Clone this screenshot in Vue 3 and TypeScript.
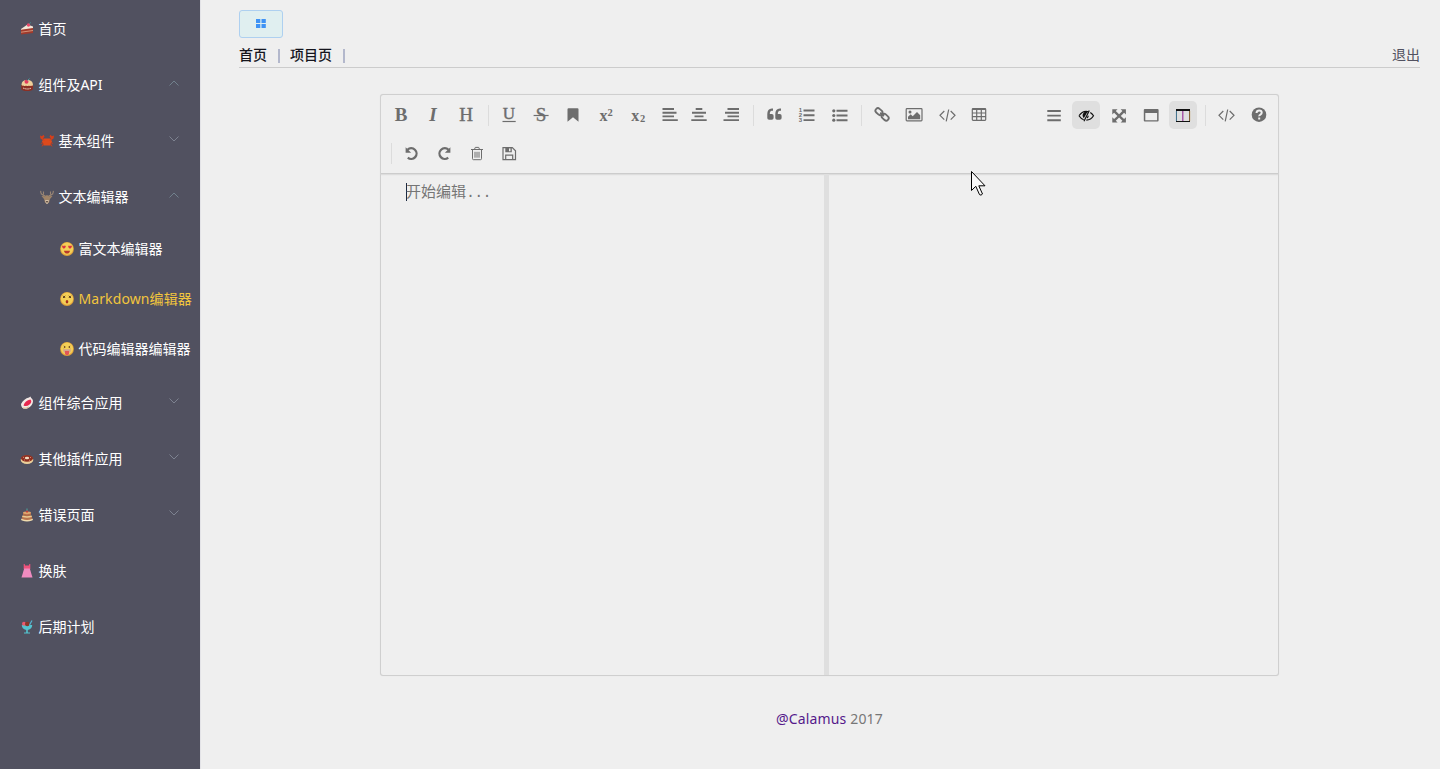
<script setup lang="ts">
interface MenuItem {
  label: string
  icon: string
  level: 1 | 2 | 3
  arrow?: 'up' | 'down'
  active?: boolean
}
interface Tool {
  icon: string
  on?: boolean
  tight?: boolean
}

const menu: MenuItem[] = [
  { label: '首页', icon: 'cake', level: 1 },
  { label: '组件及API', icon: 'cupcake', level: 1, arrow: 'up' },
  { label: '基本组件', icon: 'crab', level: 2, arrow: 'down' },
  { label: '文本编辑器', icon: 'deer', level: 2, arrow: 'up' },
  { label: '富文本编辑器', icon: 'love', level: 3 },
  { label: 'Markdown编辑器', icon: 'dizzy', level: 3, active: true },
  { label: '代码编辑器编辑器', icon: 'tongue', level: 3 },
  { label: '组件综合应用', icon: 'meat', level: 1, arrow: 'down' },
  { label: '其他插件应用', icon: 'donut', level: 1, arrow: 'down' },
  { label: '错误页面', icon: 'pancake', level: 1, arrow: 'down' },
  { label: '换肤', icon: 'dress', level: 1 },
  { label: '后期计划', icon: 'sundae', level: 1 },
]

const face = '<circle cx="7" cy="7" r="6.9" fill="#e0a03a"/><circle cx="7" cy="6.7" r="6.1" fill="#f4cf56"/>'

const pictures: Record<string, string> = {
  cake: '<path d="M1 7 7.500 2.500l5.500 2v3L1 8.500z" fill="#f3e6d8"/><path d="M1 7.800l12-1.800v5L1 12.500z" fill="#a03a2c"/><path d="M1 10.200l12-1.700" stroke="#e0a88a" stroke-width=".8"/><circle cx="8.500" cy="3" r="1.700" fill="#e8486a"/><path d="M9.500 1.800 10.500.5" stroke="#3fa0a0" stroke-width="1"/>',
  cupcake: '<path d="M1.200 7h11.800v4q-1 2-5.900 2t-5.900-2z" fill="#8c2f24"/><path d="M1.500 7Q1.500 2 7.200 2T13 7q-1 1.500-2 .5-1 1-2 0-1.500 1-3 0-1.500 1-2.500 0-1 .7-2-.5z" fill="#f0cf9a"/><circle cx="6.500" cy="3.700" r="2" fill="#e33a5c"/><path d="M7.500 2.500 9.500.5" stroke="#4a9c9c"/><path d="M3 10q4.500 2 8.500 0" stroke="#f0dccb" fill="none" stroke-dasharray="1.500 .7"/>',
  crab: '<path d="M3.500 4.500h7l1.500 3-1.500 4h-7L2 7.500z" fill="#dd4a1c"/><path d="M0 1.500l2 .7L3.500.8l1 1.700L3 4.500 5 6.500H3.500L.5 4.500zM14 1.500l-2 .7L10.500.8l-1 1.700L11 4.500 9 6.500h1.500l3-2z" fill="#d63f1a"/><path d="M3 8.500 1 9.500m2.500 0L2 12.500M11 8.500l2 1m-2.500 0 1.500 3" stroke="#c43c1c"/>',
  deer: '<path d="M.8.8Q0 4.500 5.500 6M3.500 1.500v3M.8 3.500 3 5M13.200.8Q14 4.500 8.500 6M10.500 1.500v3M13.200 3.500 11 5" stroke="#9a8674" fill="none" stroke-width="1.100"/><path d="M1.500 6l3.500.3L7 5l2 1.300 3.500-.3L10 9l-1 3.500-2 1.300-2-1.300L4 9z" fill="#a08468"/><path d="M5.300 10h3.400l-.5 3L7 14l-1.200-1z" fill="#e0cdb5"/><circle cx="7" cy="11.700" r=".9" fill="#4b3b33"/>',
  love: face + '<path d="M2 4q1.200-1 1.700.2Q5 3 5.900 4.200 5.500 6 3.900 6.800 2.200 6 2 4zM8.100 4q1.200-1 1.700.2Q11 3 12 4.200q-.4 1.800-2 2.600Q8.300 6 8.100 4z" fill="#da3340"/><path d="M4 8.800h6q-.4 2.800-3 2.800T4 8.800z" fill="#b83a2c"/>',
  dizzy: face + '<path d="M3 3.800l2.200 2.200M5.200 3.800 3 6M8.800 3.800 11 6M11 3.800 8.800 6" stroke="#5d3c1c" stroke-width="1"/><ellipse cx="7" cy="9.800" rx="1.300" ry="1.700" fill="#a5301f"/>',
  tongue: face + '<path d="M3.800 4l1.500 1-1.500 1M10.200 4 8.700 5l1.500 1" stroke="#6b4520" fill="none" stroke-width=".9"/><path d="M3 7.300h8q0 3-2 3.700H5q-2-.7-2-3.700z" fill="#d5a58c"/><path d="M5 9h4v2.200q-.3 2-2 2t-2-2z" fill="#e35656"/>',
  meat: '<path d="M1 8Q4 2.500 9 1.500l1.500-1 .5 1.300Q14 4 12.500 7.500t-6.500 5.500Q1 13 1 8z" fill="#f3e9e5"/><path d="M3.500 9.500Q5 4.500 10.500 3.500q2 2.500-1 5t-6 1z" fill="#e8284f"/><path d="M3 12q3 1 6-1" stroke="#d8b890" fill="none"/>',
  donut: '<ellipse cx="7" cy="7.700" rx="6.300" ry="4.300" fill="#ecd09a"/><ellipse cx="7" cy="6.300" rx="6" ry="3.400" fill="#8f2f20"/><ellipse cx="7" cy="6" rx="2.200" ry="1.200" fill="#f1dcc0"/><path d="M3 5l1 .7M10 5l1 1M4 8h1M9 8.300h1" stroke="#e5a08a" stroke-width=".8"/>',
  pancake: '<ellipse cx="7" cy="11.500" rx="6" ry="1.900" fill="#f0dcae"/><path d="M2 8h10v3q-5 2-10 0z" fill="#b9754d"/><ellipse cx="7" cy="8.300" rx="5" ry="1.400" fill="#e9ca93"/><path d="M3 5h8v2.500q-4 1.500-8 0z" fill="#b06d49"/><ellipse cx="7" cy="4.800" rx="4" ry="1.400" fill="#dda56e"/><path d="M7 4V.5" stroke="#4c9c96" stroke-width="1.200"/><circle cx="7" cy="3.600" r="1.100" fill="#c43c35"/>',
  dress: '<path d="M3.700 0h1L5 1.500h4L9.300 0h1v5H3.700z" fill="#f0527c"/><path d="M4.200 4.500h5.600l2.700 9h-11z" fill="#f08cc0"/>',
  sundae: '<path d="M1.800 5h10.400q0 4-4.400 5v2.500h2.200v.9H4v-.9h2.200V10Q1.800 9 1.800 5z" fill="#53c4cf"/><circle cx="4" cy="3.700" r="2" fill="#ec5a6c"/><circle cx="7.300" cy="4" r="2.300" fill="#8a3628"/><path d="M9.500 5 12 .5" stroke="#56b6d3" stroke-width="1.200"/>',
}

const slash = '<path d="M11.300 10 7 14.300l4.300 4.300M17.700 10l4.300 4.300-4.300 4.300M15.700 8.500l-2.500 11.800" class="thin"/>'

const glyphs: Record<string, string> = {
  bold: '<text x="14.100" y="20" class="serif b" text-anchor="middle">B</text>',
  italic: '<text x="14" y="20" class="serif b i" text-anchor="middle">I</text>',
  header: '<text x="14" y="20" class="serif h" text-anchor="middle">H</text>',
  underline: '<text x="14" y="18.200" class="serif u" text-anchor="middle">U</text><path d="M7.500 20.500h13.200" class="thin"/>',
  strike: '<text x="14" y="20" class="serif h" text-anchor="middle">S</text><path d="M6.600 14.500h15" class="thin"/>',
  mark: '<path d="M8.500 8.300q0-1 1-1h9q1 0 1 1v12.500l-5.500-4.500-5.500 4.500z"/>',
  sup: '<text x="7.400" y="19.500" class="script">x</text><text x="15.500" y="14.700" class="digit">2</text>',
  sub: '<text x="7.200" y="19.500" class="script">x</text><text x="15.900" y="21.300" class="digit">2</text>',
  left: '<path d="M6.500 8h11.500M6.500 11.700h14M6.500 15.400h11.500M6.500 19.100h15.300" class="bar"/>',
  center: '<path d="M10.700 8h6.600M7 11.700h14M9.500 15.400h9M6.300 19.100h15.400" class="bar"/>',
  right: '<path d="M10.500 8h11.500M8 11.700h14M10.500 15.400h11.500M6.500 19.100h15.500" class="bar"/>',
  quote: '<path d="M13 7.500h-1.200Q7.300 7.800 7.300 13v4q0 1.800 1.800 1.800h2.700q1.800 0 1.800-1.800v-2.300q0-1.800-1.800-1.800h-2q0-3 2-3.200H13zM21 7.500h-1.200q-4.500.3-4.500 5.500v4q0 1.800 1.800 1.800h2.700q1.800 0 1.800-1.800v-2.300q0-1.800-1.800-1.800h-2q0-3 2-3.200H21z"/>',
  ol: '<path d="M11.500 9.500h11M11.500 14.300h11M11.500 19.100h11" class="bar"/><text x="6.800" y="11" class="tiny">1</text><text x="6.800" y="16.200" class="tiny">2</text><text x="6.800" y="21.400" class="tiny">3</text>',
  ul: '<path d="M11.500 9.800h11M11.500 14.500h11M11.500 19.200h11" class="bar"/><circle cx="8.800" cy="9.800" r="1.600"/><circle cx="8.800" cy="14.500" r="1.600"/><circle cx="8.800" cy="19.200" r="1.600"/>',
  link: '<g class="thick" transform="rotate(42 14 13.500)"><rect x="6" y="10.900" width="7.600" height="5" rx="2.400"/><rect x="14.400" y="10.900" width="7.600" height="5" rx="2.400"/><path d="M11.500 13.400h5"/></g>',
  image: '<rect x="6.200" y="7.600" width="15.800" height="12.300" rx=".8" class="thin"/><path d="M8 18.300v-2.600l2.700-2.500 2 2 4.300-4.200 3.200 3.300v4z"/><circle cx="10" cy="11" r="1.500"/>',
  code: slash,
  table: '<rect x="7.300" y="7.600" width="13.400" height="11.800" rx=".8" class="thin"/><path d="M7 8.300h14M7 12h14M7 15.700h14M11.700 8v11.500M16.300 8v11.500" class="thin"/>',
  bars: '<path d="M7.300 10h13.500M7.300 14.600h13.500M7.300 19.200h13.500" class="bar"/>',
  eye: '<path d="M7 14.800Q9.800 10.400 14.200 10.300q1.200 0 2.200.4M7 14.800q1.800 2.900 4.700 3.900M18.300 11.500q2 1.300 3.200 3.300-2.500 4.200-7.200 4.400M16.200 14.800q0 1.500-1.200 2.300" class="thin"/><path d="M17.300 9.500 12 20.300" class="thin"/><path d="M12.500 11q-3.500 3-.7 6.200L15.700 10.400z"/>',
  expand: '<path d="M7.300 8.300h5.300l-1.800 1.800 3.300 3.200 3.300-3.200-1.800-1.800h5.300v5.300l-1.800-1.800-3.300 3.100 3.300 3.100 1.800-1.800v5.300h-5.300l1.800-1.800-3.300-3.200-3.300 3.200 1.800 1.800H7.300v-5.300l1.800 1.800 3.300-3.100-3.300-3.100-1.800 1.800z"/>',
  window: '<path d="M7.800 8h12.800q1 0 1 1v10.600q0 1-1 1H7.800q-1 0-1-1V9q0-1 1-1zM8.300 12v7.200h11.800V12z" fill-rule="evenodd"/>',
  columns: '<path d="M7 8h14v13H7zM8 10v10h12V10z" fill-rule="evenodd"/><path d="M13.800 10v10" stroke="#9a3a9a" stroke-width="1.200"/><path d="M7.400 10v10" stroke="#5f9fc4" stroke-width=".8"/><path d="M20.700 10v10" stroke="#c39146" stroke-width=".8"/>',
  help: '<circle cx="14" cy="13.700" r="7.300"/><path d="M11.500 12q.2-2.500 2.700-2.500t2.500 2.300q0 1.200-1.300 1.900t-1.100 1.600M14.200 16.500v2" stroke="#efefef" stroke-width="2" fill="none"/>',
  undo: '<path d="M9.500 9.800a5.300 5.300 0 1 1 .3 7.800" class="fat"/><path d="M7.600 7.300v5.500h5.500z"/>',
  redo: '<path d="M18.500 9.800a5.300 5.300 0 1 0-.3 7.800" class="fat"/><path d="M20.400 7.300v5.500h-5.500z"/>',
  trash: '<path d="M8 9.500h12M11.500 9.300l.8-1.900h3.400l.8 1.900M9.500 9.700v9q0 1 1 1h7q1 0 1-1v-9M12 11.800v5.900M14 11.800v5.900M16 11.800v5.900" class="fine"/>',
  save: '<path d="M8 7.600h9.300l3.200 3.200v8.900H8zM10.700 19.500v-4.300h7v4.300" class="thin"/><path d="M10.300 7.500h6.500v4.800h-6.500zM14 8.300v3h1.500v-3z" fill-rule="evenodd"/>',
}

const groups: Tool[][] = [
  [{ icon: 'bold' }, { icon: 'italic' }, { icon: 'header' }],
  [
    { icon: 'underline' }, { icon: 'strike' }, { icon: 'mark' }, { icon: 'sup' },
    { icon: 'sub' }, { icon: 'left', tight: true }, { icon: 'center' }, { icon: 'right' },
  ],
  [{ icon: 'quote' }, { icon: 'ol' }, { icon: 'ul' }],
  [{ icon: 'link' }, { icon: 'image' }, { icon: 'code' }, { icon: 'table' }],
]
const history: Tool[][] = [[], [{ icon: 'undo' }, { icon: 'redo' }, { icon: 'trash' }, { icon: 'save' }]]
const views: Tool[][] = [
  [{ icon: 'bars' }, { icon: 'eye', on: true }, { icon: 'expand' }, { icon: 'window' }, { icon: 'columns', on: true }],
  [{ icon: 'code' }, { icon: 'help' }],
]
const bars = [
  { name: 'edit', groups },
  { name: 'view', groups: views },
  { name: 'history', groups: history },
]
</script>

<template>
  <div class="app">
    <nav class="sidebar">
      <a v-for="m in menu" :key="m.label" class="item" :class="['level' + m.level, { active: m.active }]">
        <svg class="picture" viewBox="0 0 14 14" v-html="pictures[m.icon]" />
        <span>{{ m.label }}</span>
        <svg v-if="m.arrow" class="arrow" :class="m.arrow" viewBox="0 0 10 6"><path d="M.5.5 5 5 9.500.5" /></svg>
      </a>
    </nav>
    <main class="main">
      <button class="toggle">
        <svg viewBox="0 0 10 9"><path d="M0 0h4.300v4H0zM5.500 0h4.300v4H5.500zM0 5h4.300v4H0zM5.500 5h4.300v4H5.500z" /></svg>
      </button>
      <header class="crumbs">
        <b>首页</b><i />
        <b>项目页</b><i />
        <a class="logout">退出</a>
      </header>
      <section class="editor">
        <div class="toolbar">
          <div v-for="bar in bars" :key="bar.name" class="tools" :class="bar.name">
            <template v-for="(group, g) in bar.groups" :key="g">
              <span v-if="g > 0" class="sep" />
              <button v-for="t in group" :key="t.icon" class="tool" :class="{ on: t.on, tight: t.tight }">
                <svg class="glyph" viewBox="0 0 28 28" v-html="glyphs[t.icon]" />
              </button>
            </template>
          </div>
        </div>
        <div class="panes">
          <div class="write"><span class="caret" />开始编辑<span class="dots">...</span></div>
          <div class="preview" />
        </div>
      </section>
      <footer class="footer"><a>@Calamus</a> 2017</footer>
    </main>
    <svg class="pointer" viewBox="0 0 15 25">
      <path d="M.5.5v19l4.300-4.200 3.700 8.300q1.500 1.400 3-.6l-3.700-8.200h6.200z" />
    </svg>
  </div>
</template>

<style>
body {
  margin: 0;
  background: #efefef;
}
</style>

<style scoped>
.app {
  display: flex;
  width: 1440px;
  height: 769px;
  overflow: hidden;
  position: relative;
  background: #efefef;
  font: 14px/20px "Noto Sans", "Noto Sans CJK SC", sans-serif;
}
.sidebar {
  width: 200px;
  flex: none;
  background: #515160;
  border-right: 1px solid #e3e3e7;
}
.item {
  display: flex;
  align-items: center;
  box-sizing: border-box;
  height: 56px;
  padding: 1px 20px 0 20px;
  color: #fff;
  white-space: nowrap;
}
.level2 { padding-left: 40px; }
.level3 { height: 50px; padding: 0 0 0 60px; }
.active { color: #f2c53d; letter-spacing: 0.12px; }
.picture {
  width: 14px;
  height: 14px;
  flex: none;
  margin: 0 4.400px 0 0;
}
.arrow {
  width: 10px;
  height: 6px;
  margin: 0 1px 4px auto;
  fill: none;
  stroke: #7d8290;
  overflow: visible;
}
.arrow.up {
  transform: scaleY(-1);
  stroke: #71818d;
}
.main {
  flex: 1;
  display: flex;
  flex-direction: column;
  padding: 10px 20px 0 38px;
}
.toggle {
  width: 44px;
  height: 28px;
  padding: 0 0 1px;
  display: flex;
  align-items: center;
  justify-content: center;
  border: 1px solid #aed0f0;
  border-radius: 3px;
  background: #e0eff0;
}
.toggle svg {
  width: 10px;
  height: 9px;
  fill: #3f93f5;
}
.crumbs {
  display: flex;
  align-items: center;
  height: 29px;
  border-bottom: 1px solid #ccc;
  color: #15151d;
}
.crumbs b { font-weight: 500; margin-top: 4px; }
.crumbs i {
  width: 2px;
  height: 14px;
  margin: 6px 10.500px 0 10.500px;
  background: #b3b8cc;
}
.logout {
  margin: 4px 0 0 auto;
  color: #515160;
}
.editor {
  width: 897px;
  height: 580px;
  box-sizing: border-box;
  margin: 27px 0 0 142px;
  border-radius: 2px;
  box-shadow: 0 0 0 1px #cfcfcf, 0 0 2px #ccc;
  display: flex;
  flex-direction: column;
}
.toolbar {
  height: 79px;
  box-sizing: border-box;
  display: flex;
  flex-wrap: wrap;
  align-content: flex-start;
  justify-content: space-between;
  row-gap: 10.500px;
  padding: 6px 1px 0 6px;
  border-bottom: 1px solid #ccc;
  box-shadow: 0 1px 1px #ddd;
}
.tools {
  display: flex;
  align-items: center;
  height: 28px;
}
.history { width: 100%; }
.tool {
  width: 28px;
  height: 28px;
  padding: 0;
  margin: 0 4.300px 0 0;
  border: 0;
  border-radius: 5px;
  background: none;
  color: #6d6d6d;
}
.tool.tight { margin-right: 0.200px; }
.tool.on {
  background: #dfdfdf;
  color: #111;
}
.sep {
  width: 1px;
  height: 21px;
  margin: 0 6px 0 4px;
  background: #dcdcdc;
}
.glyph {
  display: block;
  width: 28px;
  height: 28px;
  fill: currentColor;
}
.glyph :deep(.fine) { fill: none; stroke: currentColor; stroke-width: 1; }
.glyph :deep(.thin) { fill: none; stroke: currentColor; stroke-width: 1.2; }
.glyph :deep(.thick) { fill: none; stroke: currentColor; stroke-width: 1.8; }
.glyph :deep(.fat) { fill: none; stroke: currentColor; stroke-width: 2.3; }
.glyph :deep(.bar) { stroke: currentColor; stroke-width: 1.9; }
.glyph :deep(.serif) { font: 19px "Liberation Serif", serif; stroke: currentColor; stroke-width: 0.4; }
.glyph :deep(.b) { font-weight: 700; font-size: 19px; stroke: none; }
.glyph :deep(.i) { font-style: italic; }
.glyph :deep(.u) { font-size: 17px; }
.glyph :deep(.script) { font: 700 16px "Liberation Serif", serif; }
.glyph :deep(.digit) { font: 700 10.5px "Liberation Serif", serif; }
.glyph :deep(.tiny) { font: 700 6px "Liberation Sans", sans-serif; }
.panes {
  flex: 1;
  display: flex;
}
.write {
  flex: none;
  width: 448px;
  box-sizing: border-box;
  padding: 6px 25px;
  border-right: 5px solid #dfdfdf;
  color: #757575;
  font: 15px/22px "Noto Sans CJK SC", sans-serif;
  display: flex;
}
.caret {
  width: 1px;
  height: 18px;
  margin: 3px -1px 0 0;
  background: #1c2a40;
}
.dots {
  margin-top: 3px;
  font-family: "Liberation Mono", monospace;
  letter-spacing: -0.75px;
}
.preview { flex: 1; }
.footer {
  margin-top: 34px;
  text-align: center;
  letter-spacing: 0.15px;
  color: #777;
}
.footer a { color: #551a8b; }
.pointer {
  position: absolute;
  left: 971px;
  top: 171px;
  width: 15px;
  height: 25px;
  fill: #fafafa;
  stroke: #000;
}
</style>
